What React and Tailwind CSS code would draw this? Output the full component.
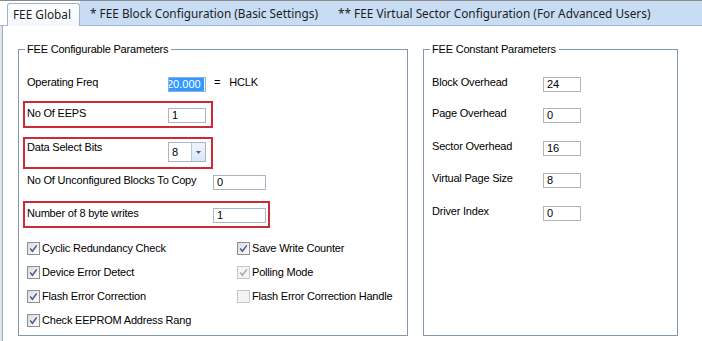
const labelFont = "font-['Liberation_Sans',Arial,sans-serif] text-[11px] leading-[13px] tracking-[-0.2px] text-black";
const boxStyle = "h-[15px] border border-[#abb6c4] bg-white pl-[3px] flex items-center overflow-hidden";
const redBox = "ml-[4px] border-2 border-[#cc2a36] pl-[2px] flex items-start";

function Field({ value, width }) {
  return (
    <div className={boxStyle} style={{ width }}>
      {value}
    </div>
  );
}

function Check({ label, checked = true, disabled = false }) {
  return (
    <div className="flex items-center h-[13px]">
      <span
        className={
          disabled
            ? "w-[13px] h-[13px] border border-[#c6c6c6] bg-[#f4f4f4] flex items-center justify-center"
            : "w-[13px] h-[13px] border border-[#8e8f8f] bg-gradient-to-br from-[#d8dadd] to-white flex items-center justify-center"
        }
      >
        {checked && (
          <svg width="9" height="9" viewBox="0 0 9 9">
            <path
              d="M1.2 4.6 L3.4 7.2 L7.8 1.4"
              fill="none"
              stroke={disabled ? "#a9a9a9" : "#4a5b8c"}
              strokeWidth="1.5"
            />
          </svg>
        )}
      </span>
      <span className="ml-[2px]">{label}</span>
    </div>
  );
}

function ConstRow({ label, value, top }) {
  return (
    <div className={`flex items-start pl-[8px] ${top}`}>
      <span className="w-[111px] -mt-px">{label}</span>
      <Field value={value} width="38px" />
    </div>
  );
}

export default function App() {
  return (
    <div className={`w-[702px] h-[341px] bg-white overflow-hidden ${labelFont}`}>
      {/* tab strip */}
      <div className="flex h-[26px] border-t border-[#8a8a8a] font-['Noto_Sans',sans-serif] text-[11.8px] leading-[14px] tracking-normal text-[#1e1e1e]">
        <div className="w-[7px] border-b border-[#98b3d4]" />
        <div className="w-[73px] mt-[2px] border border-b-0 border-[#98b3d4] rounded-t-[3px] bg-gradient-to-b from-white to-[#f2f7fd] pl-[5px] pt-[3px]">
          FEE Global
        </div>
        <div className="flex-1 flex bg-[#c8dcf4] border-b border-[#98b3d4] pt-[5px]">
          <div className="w-[248px] pl-[10px]">* FEE Block Configuration (Basic Settings)</div>
          <div className="pl-[10px]">** FEE Virtual Sector Configuration (For Advanced Users)</div>
        </div>
      </div>

      {/* page */}
      <div className="flex h-[315px] border-l-2 border-[#e1e6ec] shadow-[inset_1px_0_0_#9fadbb] pl-[16px] pt-[17px] gap-[15px]">
        <fieldset className="w-[390px] h-[293px] border border-[#8199ab]">
          <legend className="ml-[6px] pl-[2px] pr-[3px]">FEE Configurable Parameters</legend>

          <div className="flex items-start pl-[8px] mt-[21px]">
            <span className="w-[141px] -mt-px">Operating Freq</span>
            <div className="w-[38px] h-[15px] border border-[#8fb1d8] overflow-hidden whitespace-nowrap tracking-normal">
              <span className="inline-block -ml-[2px] pr-[3px] bg-[#3399ff] text-white">20.000</span>
            </div>
            <span className="ml-[8px] -mt-px">=</span>
            <span className="ml-[9px] -mt-px">HCLK</span>
          </div>

          <div className={`${redBox} w-[190px] h-[27px] mt-[9px] pt-[5px]`}>
            <span className="w-[141px] -mt-px">No Of EEPS</span>
            <Field value="1" width="38px" />
          </div>

          <div className={`${redBox} w-[190px] h-[32px] mt-[9px] pt-[3px]`}>
            <span className="w-[141px] -mt-px">Data Select Bits</span>
            <div className="w-[38px] h-[20px] border border-[#abb6c4] bg-white flex">
              <span className="flex-1 pl-[3px] flex items-center">8</span>
              <span className="w-[14px] border-l border-[#b7c6d8] bg-gradient-to-b from-[#eef4fc] to-[#dce8f7] flex items-center justify-center">
                <svg width="5" height="3" viewBox="0 0 5 3">
                  <path d="M0 0 H5 L2.5 3 Z" fill="#4b5d83" />
                </svg>
              </span>
            </div>
          </div>

          <div className="flex items-start pl-[8px] mt-[6px]">
            <span className="w-[186px] -mt-px">No Of Unconfigured Blocks To Copy</span>
            <Field value="0" width="53px" />
          </div>

          <div className={`${redBox} w-[247px] h-[27px] mt-[11px] pt-[5px]`}>
            <span className="w-[186px] -mt-px">Number of 8 byte writes</span>
            <Field value="1" width="53px" />
          </div>

          <div className="grid grid-cols-[210px_1fr] pl-[8px] mt-[14px] gap-y-[11px]">
            <Check label="Cyclic Redundancy Check" />
            <Check label="Save Write Counter" />
            <Check label="Device Error Detect" />
            <Check label="Polling Mode" disabled />
            <Check label="Flash Error Correction" />
            <Check label="Flash Error Correction Handle" checked={false} disabled />
            <Check label="Check EEPROM Address Rang" />
          </div>
        </fieldset>

        <fieldset className="w-[255px] h-[293px] border border-[#8199ab]">
          <legend className="ml-[6px] pl-[2px] pr-[3px]">FEE Constant Parameters</legend>
          <ConstRow label="Block Overhead" value="24" top="mt-[21px]" />
          <ConstRow label="Page Overhead" value="0" top="mt-[16px]" />
          <ConstRow label="Sector Overhead" value="16" top="mt-[18px]" />
          <ConstRow label="Virtual Page Size" value="8" top="mt-[17px]" />
          <ConstRow label="Driver Index" value="0" top="mt-[18px]" />
        </fieldset>
      </div>
    </div>
  );
}
